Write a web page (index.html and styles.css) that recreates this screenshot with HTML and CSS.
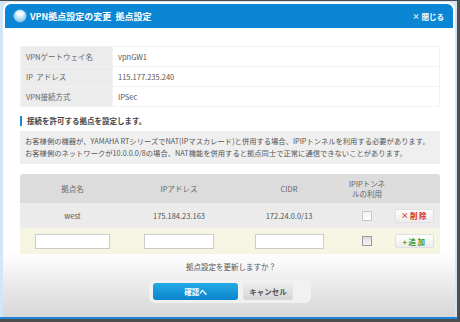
FILE: index.html
```html
<!DOCTYPE html>
<html lang="ja">
<head>
    <meta charset="UTF-8">
    <title>VPN拠点設定の変更</title>
    <link rel="stylesheet" href="styles.css">
</head>
<body>

<div class="frame">
    <div class="dialog">
        <div class="head">
            <svg class="globe" width="14" height="14" viewBox="0 0 14 14">
                <defs>
                    <radialGradient id="g" cx="50%" cy="40%" r="60%">
                        <stop offset="0" stop-color="#f2faff"/>
                        <stop offset="0.6" stop-color="#b9def5"/>
                        <stop offset="1" stop-color="#6fb6e4"/>
                    </radialGradient>
                </defs>
                <circle cx="7" cy="7" r="6.5" fill="url(#g)"/>
                <ellipse cx="7" cy="4.5" rx="4" ry="2.2" fill="#ffffff" opacity="0.7"/>
            </svg>
            <span class="title">VPN拠点設定の変更 &nbsp;拠点設定</span>
            <span class="close">× 閉じる</span>
        </div>

        <div class="body">
            <table class="info">
                <tr><th>VPNゲートウェイ名</th><td>vpnGW1</td></tr>
                <tr><th>IP &nbsp;アドレス</th><td>115.177.235.240</td></tr>
                <tr><th>VPN接続方式</th><td>IPSec</td></tr>
            </table>

            <h3 class="sect">接続を許可する拠点を設定します。</h3>

            <div class="note">
                <p>お客様側の機器が、YAMAHA RTシリーズでNAT(IPマスカレード)と併用する場合、IPIPトンネルを利用する必要があります。</p>
                <p>お客様側のネットワークが10.0.0.0/8の場合、NAT機能を併用すると拠点同士で正常に通信できないことがあります。</p>
            </div>

            <div class="sites">
                <div class="row hdr">
                    <div class="cell">拠点名</div>
                    <div class="cell">IPアドレス</div>
                    <div class="cell">CIDR</div>
                    <div class="cell">IPIPトンネ<br>ルの利用</div>
                    <div class="cell"></div>
                </div>
                <div class="row item">
                    <div class="cell">west</div>
                    <div class="cell">175.184.23.163</div>
                    <div class="cell">172.24.0.0/13</div>
                    <div class="cell"><span class="check"></span></div>
                    <div class="cell"><button class="mini del">×削除</button></div>
                </div>
                <div class="row add-row">
                    <div class="cell"><input type="text" class="field f1"></div>
                    <div class="cell"><input type="text" class="field f2"></div>
                    <div class="cell"><input type="text" class="field f3"></div>
                    <div class="cell"><span class="check dark"></span></div>
                    <div class="cell"><button class="mini add">+追加</button></div>
                </div>
            </div>

            <p class="ask">拠点設定を更新しますか？</p>

            <div class="btns">
                <button class="ok">確認へ</button>
                <button class="cancel">キャンセル</button>
            </div>
        </div>
    </div>
</div>

</body>
</html>
```

FILE: styles.css
```css
body {
    margin: 0;
    background-color: #4e4e4e;
    font-family: "Noto Sans CJK JP", "Liberation Sans", sans-serif;
    font-size: 7.5px;
    color: #555;
}
.frame {
    width: 457px;
    height: 318px;
    margin-top: 1px;
    padding-top: 1px;
    box-sizing: border-box;
    background-color: #d3e6f8;
    border-bottom: 2px solid #1f86e0;
}
.dialog {
    margin-left: 3px;
    width: 452px;
    height: 315px;
    box-sizing: border-box;
    padding: 2px 2px 0 2px;
    background: linear-gradient(#ffffff 250px, #d8d8d8 312px);
    border-radius: 7px 7px 0 0;
}
.head {
    height: 24px;
    background-color: #0b86d4;
    border-radius: 6px 6px 0 0;
    display: flex;
    align-items: center;
    padding: 0 9px 0 8px;
    color: #fff;
    font-weight: bold;
}
.globe {
    margin-right: 3px;
}
.title {
    font-size: 9px;
    flex: 1;
}
.close {
    font-size: 7.5px;
}
.body {
    padding: 18px 11px 0 15px;
}
.info {
    width: 420px;
    border-collapse: collapse;
}
.info th, .info td {
    height: 19px;
    padding: 0 5px;
    text-align: left;
    font-weight: normal;
    border: 1px solid #f2f2f2;
}
.info th {
    width: 81px;
    background-color: #ececec;
    color: #666;
}
.info td {
    color: #555;
}
.sect {
    margin: 9px 0 0;
    padding-left: 5px;
    border-left: 2px solid #1a8ad8;
    font-size: 7.5px;
    line-height: 10px;
    color: #444;
}
.note {
    margin-top: 5px;
    width: 420px;
    box-sizing: border-box;
    padding: 5px 5px;
    background-color: #efefef;
    color: #555;
    font-size: 7.3px;
}
.note p {
    margin: 0;
    line-height: 11.5px;
    white-space: nowrap;
}
.sites {
    margin-top: 10px;
    width: 420px;
}
.row {
    display: grid;
    grid-template-columns: 105px 108px 112px 44px 51px;
    align-items: center;
    text-align: center;
}
.hdr {
    height: 29px;
    background-color: #dcdcdc;
    border-radius: 3px 3px 0 0;
    line-height: 10px;
    color: #666;
}
.item {
    height: 25px;
    background-color: #ebebeb;
}
.add-row {
    height: 26px;
    background-color: #f6f4e2;
}
.cell {
    display: flex;
    justify-content: center;
    align-items: center;
}
.field {
    height: 15px;
    box-sizing: border-box;
    border: 1px solid #ccc;
    background-color: #fff;
    padding: 0;
}
.f1 { width: 75px; }
.f2 { width: 70px; }
.f3 { width: 69px; }
.check {
    width: 8px;
    height: 8px;
    border: 1px solid #c8c8c8;
    background: linear-gradient(#f2f2f2, #fff);
}
.check.dark {
    border-color: #999;
    background: linear-gradient(#ddd, #f4f4f4);
}
.mini {
    width: 39px;
    height: 14px;
    padding: 0;
    border: 1px solid #e0e0e0;
    border-radius: 2px;
    background: linear-gradient(#ffffff, #ececec);
    font-family: inherit;
    font-size: 7.5px;
    font-weight: bold;
    letter-spacing: 1.5px;
    cursor: pointer;
}
.del { color: #d8261d; }
.add { color: #3f9a24; }
.ask {
    margin: 8px 0 0;
    text-align: center;
    color: #555;
    line-height: 10px;
}
.btns {
    display: flex;
    gap: 5px;
    width: 148px;
    margin: 8px auto 0;
    padding: 3px 10px 3px 4px;
    background-color: #f1f1f1;
    border-radius: 6px;
    transform: translateX(-1px);
}
.btns button {
    height: 17px;
    padding: 0;
    border: none;
    border-radius: 3px;
    font-family: inherit;
    font-size: 7.5px;
    font-weight: bold;
    white-space: nowrap;
    cursor: pointer;
}
.ok {
    width: 85px;
    background: linear-gradient(#25a9e6, #0a85cc);
    color: #fff;
}
.cancel {
    width: 50px;
    background: linear-gradient(#ececec, #d6d6d6);
    color: #555;
}
```
